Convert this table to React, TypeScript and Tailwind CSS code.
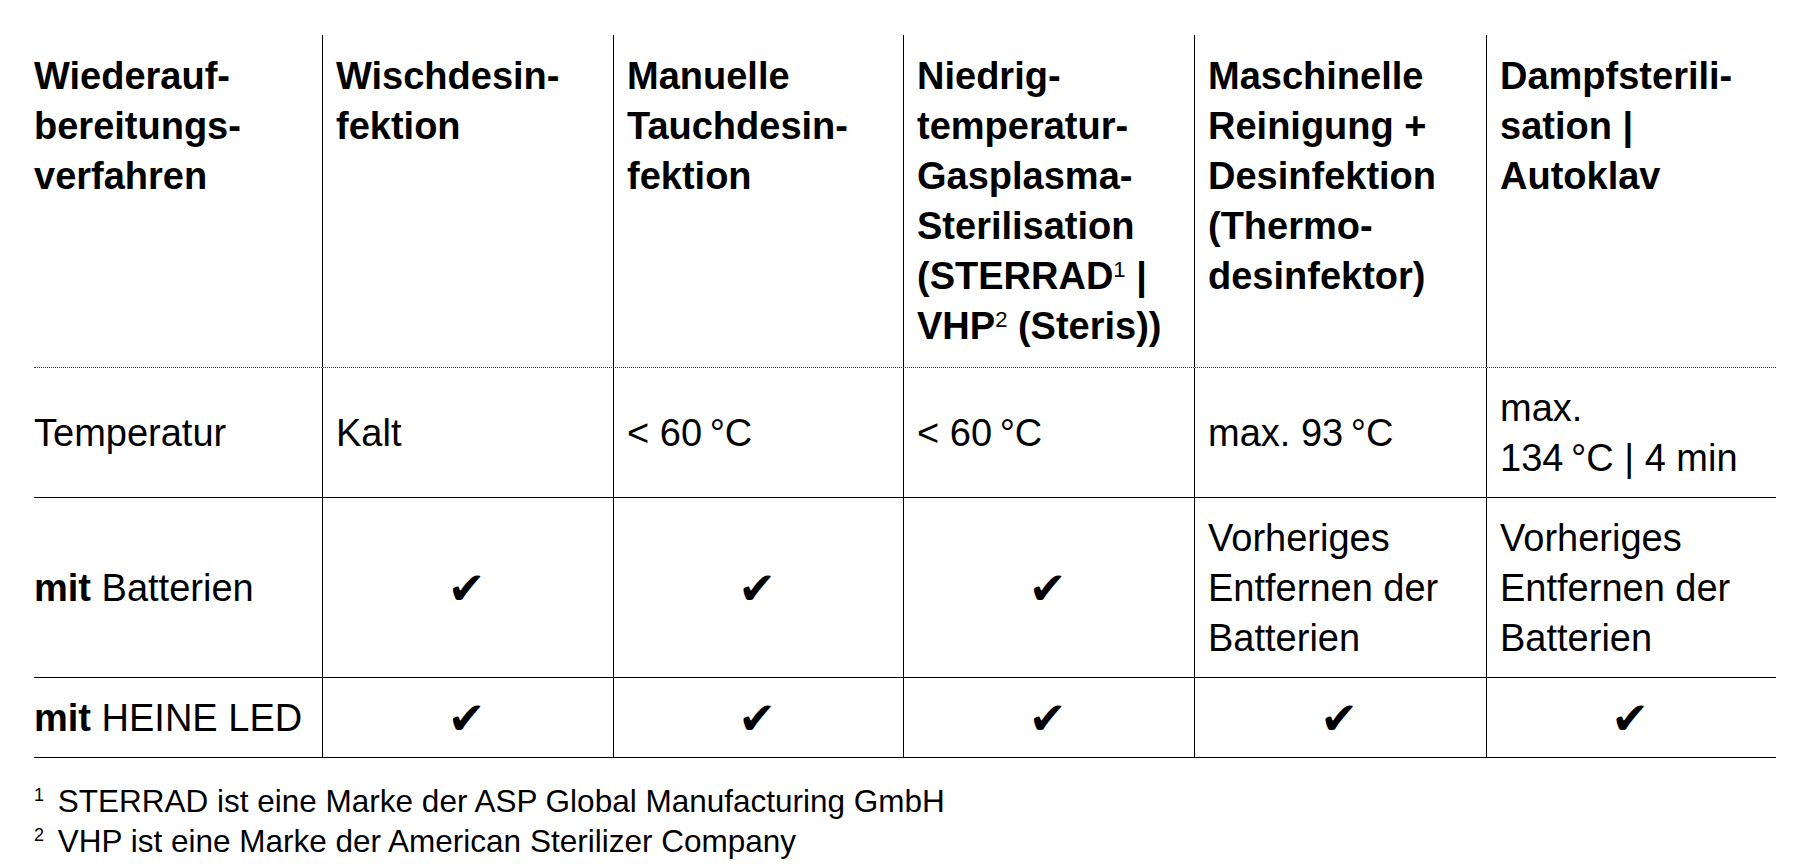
const grid = 'grid grid-cols-[288px_291px_290px_291px_292px_290px]';

function Sup({ children }: { children: React.ReactNode }) {
  return <sup className="relative top-[-12px] align-baseline text-[22px] font-normal">{children}</sup>;
}

function Check() {
  return <span className="mr-[16px] font-['DejaVu_Sans',sans-serif] text-[45px] leading-none">✔</span>;
}

function HeadCell({ first, children }: { first?: boolean; children: React.ReactNode }) {
  return (
    <div className={first ? 'pt-4 pb-4' : 'border-l border-black pt-4 pb-4 pl-[13px]'}>{children}</div>
  );
}

function Cell({
  first,
  center,
  children,
}: {
  first?: boolean;
  center?: boolean;
  children: React.ReactNode;
}) {
  const base = first ? 'flex items-center' : 'flex items-center border-l border-black pl-[13px]';
  return (
    <div className={`${base} pt-[15px] pb-[14px] ${center ? 'justify-center pl-0' : ''}`}>{children}</div>
  );
}

export default function App() {
  return (
    <div className="min-h-screen bg-white pt-[35px] pl-[34px] font-['Liberation_Sans',Arial,sans-serif] text-black">
      <div className="w-[1742px]">
        <div className={`${grid} border-b border-dotted border-[#333] text-[38px] font-bold leading-[50px]`}>
          <HeadCell first>
            Wiederauf-
            <br />
            bereitungs-
            <br />
            verfahren
          </HeadCell>
          <HeadCell>
            Wischdesin-
            <br />
            fektion
          </HeadCell>
          <HeadCell>
            Manuelle
            <br />
            Tauchdesin-
            <br />
            fektion
          </HeadCell>
          <HeadCell>
            Niedrig-
            <br />
            temperatur-
            <br />
            Gasplasma-
            <br />
            Sterilisation
            <br />
            (STERRAD<Sup>1</Sup> |
            <br />
            VHP<Sup>2</Sup> (Steris))
          </HeadCell>
          <HeadCell>
            Maschinelle
            <br />
            Reinigung +
            <br />
            Desinfektion
            <br />
            (Thermo-
            <br />
            desinfektor)
          </HeadCell>
          <HeadCell>
            Dampfsterili-
            <br />
            sation |
            <br />
            Autoklav
          </HeadCell>
        </div>

        <div className={`${grid} border-b border-black text-[38px] leading-[50px]`}>
          <Cell first>Temperatur</Cell>
          <Cell>Kalt</Cell>
          <Cell>&lt; 60{'\u2009'}°C</Cell>
          <Cell>&lt; 60{'\u2009'}°C</Cell>
          <Cell>max. 93{'\u2009'}°C</Cell>
          <Cell>
            <span>
              max.
              <br />
              134{'\u2009'}°C | 4 min
            </span>
          </Cell>
        </div>

        <div className={`${grid} border-b border-black text-[38px] leading-[50px]`}>
          <Cell first>
            <span>
              <b>mit</b> Batterien
            </span>
          </Cell>
          <Cell center>
            <Check />
          </Cell>
          <Cell center>
            <Check />
          </Cell>
          <Cell center>
            <Check />
          </Cell>
          <Cell>
            <span>
              Vorheriges
              <br />
              Entfernen der
              <br />
              Batterien
            </span>
          </Cell>
          <Cell>
            <span>
              Vorheriges
              <br />
              Entfernen der
              <br />
              Batterien
            </span>
          </Cell>
        </div>

        <div className={`${grid} border-b border-black text-[38px] leading-[50px]`}>
          <Cell first>
            <span>
              <b>mit</b> HEINE LED
            </span>
          </Cell>
          <Cell center>
            <Check />
          </Cell>
          <Cell center>
            <Check />
          </Cell>
          <Cell center>
            <Check />
          </Cell>
          <Cell center>
            <Check />
          </Cell>
          <Cell center>
            <Check />
          </Cell>
        </div>
      </div>

      <div className="mt-[23px] text-[31.5px] leading-[40px]">
        <p>
          <sup className="relative top-[-11px] mr-[5px] align-baseline text-[18px]">1</sup> STERRAD ist eine Marke der ASP
          Global Manufacturing GmbH
        </p>
        <p>
          <sup className="relative top-[-11px] mr-[5px] align-baseline text-[18px]">2</sup> VHP ist eine Marke der American
          Sterilizer Company
        </p>
      </div>
    </div>
  );
}
